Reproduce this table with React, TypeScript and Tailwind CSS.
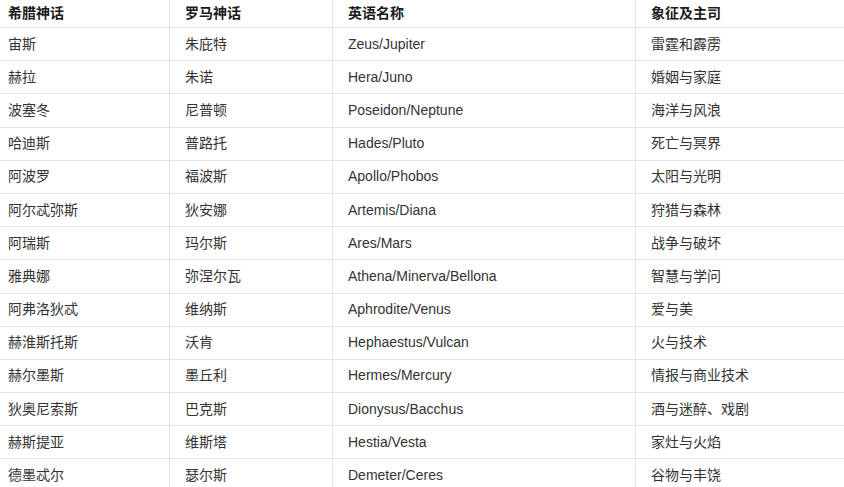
const rows: [string, string, string, string][] = [
  ['宙斯', '朱庇特', 'Zeus/Jupiter', '雷霆和霹雳'],
  ['赫拉', '朱诺', 'Hera/Juno', '婚姻与家庭'],
  ['波塞冬', '尼普顿', 'Poseidon/Neptune', '海洋与风浪'],
  ['哈迪斯', '普路托', 'Hades/Pluto', '死亡与冥界'],
  ['阿波罗', '福波斯', 'Apollo/Phobos', '太阳与光明'],
  ['阿尔忒弥斯', '狄安娜', 'Artemis/Diana', '狩猎与森林'],
  ['阿瑞斯', '玛尔斯', 'Ares/Mars', '战争与破坏'],
  ['雅典娜', '弥涅尔瓦', 'Athena/Minerva/Bellona', '智慧与学问'],
  ['阿弗洛狄忒', '维纳斯', 'Aphrodite/Venus', '爱与美'],
  ['赫淮斯托斯', '沃肯', 'Hephaestus/Vulcan', '火与技术'],
  ['赫尔墨斯', '墨丘利', 'Hermes/Mercury', '情报与商业技术'],
  ['狄奥尼索斯', '巴克斯', 'Dionysus/Bacchus', '酒与迷醉、戏剧'],
  ['赫斯提亚', '维斯塔', 'Hestia/Vesta', '家灶与火焰'],
  ['德墨忒尔', '瑟尔斯', 'Demeter/Ceres', '谷物与丰饶'],
];

const headers = ['希腊神话', '罗马神话', '英语名称', '象征及主司'];

const cols = 'grid grid-cols-[169px_163px_303px_1fr]';

function Cell({ first, children }: { first: boolean; children: React.ReactNode }) {
  return (
    <div className={first ? 'flex items-center pl-2' : 'flex items-center border-l border-[#e3e3e3] pl-[15px]'}>
      {children}
    </div>
  );
}

export default function App() {
  return (
    <div className="w-[844px] h-[487px] overflow-hidden bg-white font-['Liberation_Sans','Noto_Sans_CJK_SC',sans-serif] text-[14px]">
      <div className={`${cols} h-[28px] border-b border-[#e3e3e3] font-bold text-[#1a1a1a]`}>
        {headers.map((h, i) => (
          <Cell key={h} first={i === 0}>{h}</Cell>
        ))}
      </div>
      {rows.map((r) => (
        <div key={r[0]} className={`${cols} h-[33.2px] border-b border-[#e3e3e3] text-[#333333]`}>
          {r.map((c, i) => (
            <Cell key={i} first={i === 0}>{c}</Cell>
          ))}
        </div>
      ))}
    </div>
  );
}
